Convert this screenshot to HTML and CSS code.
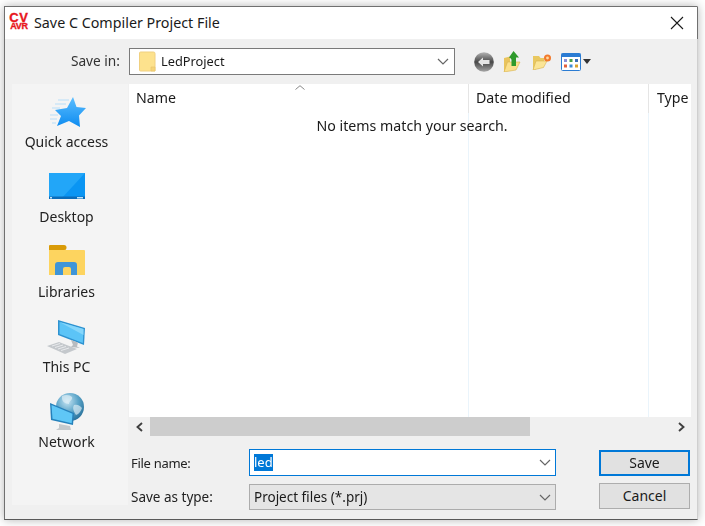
FILE: index.html
```html
<!DOCTYPE html>
<html lang="en">
<head>
<meta charset="utf-8">
<title>Save C Compiler Project File</title>
<link rel="stylesheet" href="styles.css">
</head>
<body>
<div class="window">
  <header class="titlebar">
    <div class="app-logo"><span class="cv">CV</span><span class="avr">AVR</span></div>
    <span class="title">Save C Compiler Project File</span>
    <svg class="close" width="14" height="14" viewBox="0 0 14 14"><path d="M1 1L13 13M13 1L1 13" stroke="#1a1a1a" stroke-width="1.1" fill="none"/></svg>
  </header>
  <div class="toolbar">
    <span class="savein">Save in:</span>
    <div class="combo">
      <svg class="folder-small" width="17" height="21" viewBox="0 0 17 21"><path d="M1.500 1h13a1.500 1.500 0 0 1 1.500 1.500V20H1.500A1 1 0 0 1 .5 19V2A1 1 0 0 1 1.500 1z" fill="#fde28d" stroke="#f0d080"/><path d="M12 20v-4h4v4z" fill="#f6d478" stroke="#e8c468" stroke-width=".6"/></svg>
      <span class="combo-text">LedProject</span>
      <svg class="chev" width="12" height="7" viewBox="0 0 12 7"><path d="M1 1l5 5 5-5" stroke="#666" stroke-width="1.200" fill="none"/></svg>
    </div>
    <div class="tools">
      <svg width="20" height="20" viewBox="0 0 20 20">
        <defs><linearGradient id="gb" x1="0" y1="0" x2="0" y2="1"><stop offset="0" stop-color="#b4b4b4"/><stop offset=".5" stop-color="#474747"/><stop offset="1" stop-color="#a6a6a6"/></linearGradient></defs>
        <circle cx="10" cy="10" r="9.800" fill="url(#gb)"/>
        <path d="M4 10l5-4.500V8h6.500v4H9v2.500z" fill="#e6e6e6"/>
      </svg>
      <svg width="18" height="21" viewBox="0 0 18 21">
        <path d="M1 7l6-1.500V19l-6 2z" fill="#e9c45d"/>
        <path d="M1 21l3.500-10H17l-4 8z" fill="#fbe08c" stroke="#d9b450" stroke-width=".6"/>
        <path d="M10.500 0l5.500 6.500h-3V15H8.500V9C8.500 8 7.500 7 6 6.500z" fill="#2e9a2c"/>
      </svg>
      <svg class="tool-new" width="20" height="16" viewBox="0 0 20 16">
        <path d="M1 2h6l1.500 2H12v9l-11 3z" fill="#e9c860"/>
        <path d="M1 16l3-9h11l-3.500 6.500z" fill="#fbe596" stroke="#d9b450" stroke-width=".6"/>
        <circle cx="15.500" cy="4" r="3.500" fill="#f2792b"/>
        <circle cx="15.500" cy="4" r="1.400" fill="#fdd9a0"/>
      </svg>
      <div class="viewgroup">
        <svg width="20" height="18" viewBox="0 0 20 18">
          <rect x=".5" y=".5" width="19" height="17" rx="1" fill="#fff" stroke="#2b7cd3"/>
          <rect x=".5" y=".5" width="19" height="3.500" fill="#2b7cd3"/>
          <rect x="3" y="6" width="3" height="3" fill="#8d8fd6"/><rect x="8.500" y="6" width="3" height="3" fill="#4aa04a"/><rect x="14" y="6" width="3" height="3" fill="#3c6fb8"/>
          <rect x="3" y="11.500" width="3" height="3" fill="#e2603c"/><rect x="8.500" y="11.500" width="3" height="3" fill="#3d8cd6"/><rect x="14" y="11.500" width="3" height="3" fill="#d9a32e"/>
        </svg>
        <span class="caret"></span>
      </div>
    </div>
  </div>
  <div class="main">
    <nav class="sidebar">
      <div class="place place-star">
        <svg width="37" height="30" viewBox="0 0 37 30">
          <defs><linearGradient id="gs" x1="0" y1="0" x2="0" y2="1"><stop offset="0" stop-color="#5cbeff"/><stop offset="1" stop-color="#0d8bf0"/></linearGradient></defs>
          <path d="M9 3h11M6 7h11M3 11h8M1 18h8M1 22h7M3 26h4" stroke="#a8d8f8" stroke-width="1.200" opacity=".8"/>
          <path d="M24 0l3.500 10 9.500 1-7 7.500L31 30l-11-6-12 5 4-10-6-6 12-2z" fill="url(#gs)"/>
        </svg>
        <span>Quick access</span>
      </div>
      <div class="place place-desk">
        <svg width="36" height="26" viewBox="0 0 36 26">
          <rect width="36" height="26" fill="#0a95f3"/>
          <path d="M0 0h36L12 26H0z" fill="#22a6f8"/>
          <rect y="23.500" width="36" height="2.500" fill="#0a6cba"/>
          <rect x="1" y="24" width="2" height="1.500" fill="#bfe2f7"/>
          <rect x="28" y="24" width="6" height="1.500" fill="#bfe2f7"/>
        </svg>
        <span>Desktop</span>
      </div>
      <div class="place place-lib">
        <svg width="36" height="30" viewBox="0 0 36 30">
          <path d="M0 2h15l2 3h18a1 1 0 0 1 1 1v24H0z" fill="#fdd45f"/>
          <path d="M0 1a1 1 0 0 1 1-1h14a2.500 2.500 0 0 1 0 5H0z" fill="#d99b08"/>
          <path d="M6 30V20a3 3 0 0 1 3-3h16a3 3 0 0 1 3 3v10h-6v-6a2 2 0 0 0-2-2h-4a2 2 0 0 0-2 2v6z" fill="#3f95d8"/>
        </svg>
        <span>Libraries</span>
      </div>
      <div class="place place-pc">
        <svg width="40" height="34" viewBox="0 0 40 34">
          <path d="M12 0l27 8-1 17-26-10z" fill="#2e92d0"/>
          <path d="M13.500 2l24 7-.7 14-23.300-9z" fill="#5cc4f7"/>
          <path d="M13.500 2l24 7v6z" fill="#85d6fb"/>
          <path d="M25 20l7 2.500-1 4 3 1.500-9-1 2-2z" fill="#b8bcc0"/>
          <path d="M1 26l12-4 18 7-12 5z" fill="#c4c8cc"/>
          <path d="M6 26l8-2.500M9 27.500l8-2.500M12 29l8-2.500M15 30.500l8-2.500" stroke="#e8eaec" stroke-width="1"/>
        </svg>
        <span>This PC</span>
      </div>
      <div class="place place-net">
        <svg width="35" height="37" viewBox="0 0 35 37">
          <defs><radialGradient id="gg" cx=".4" cy=".3" r=".8"><stop offset="0" stop-color="#c6e4f2"/><stop offset=".5" stop-color="#5aa4c8"/><stop offset="1" stop-color="#1f6691"/></radialGradient></defs>
          <circle cx="21" cy="14" r="14" fill="url(#gg)"/>
          <path d="M13 3c4-2 8-1 10 1 1 3-3 4-3 7-4 0-8-3-7-8zM25 12c4-1 6 1 8 3-1 3-3 6-6 7-2-3-4-7-2-10z" fill="#e3f1f7" opacity=".65"/>
          <path d="M1 10l24 10-1 12L2 27z" fill="#2581bb"/>
          <path d="M2.500 12l21 8.700-.8 9.500L3.500 25.800z" fill="#5fc7f6"/>
          <path d="M10 31l11 2 1 4H7l3-2z" fill="#c5c9cc"/>
        </svg>
        <span>Network</span>
      </div>
    </nav>
    <div class="content">
      <section class="list">
        <div class="list-head">
          <div class="col col-name">Name<svg class="sort" width="10" height="5" viewBox="0 0 10 5"><path d="M.5 4.500L5 .7l4.500 3.800" stroke="#888" stroke-width="1" fill="none"/></svg></div>
          <div class="col col-date">Date modified</div>
          <div class="col col-type">Type</div>
        </div>
        <div class="list-body">
          <div class="guides"><span class="guide-name"></span><span class="guide-date"></span></div>
          <p class="empty">No items match your search.</p>
        </div>
      </section>
      <div class="hscroll">
        <svg class="arrow" width="9" height="10" viewBox="0 0 9 10"><path d="M7 1L2.500 5 7 9" stroke="#404040" stroke-width="1.900" fill="none"/></svg>
        <div class="track"><div class="thumb"></div></div>
        <svg class="arrow" width="9" height="10" viewBox="0 0 9 10"><path d="M2 1l4.500 4L2 9" stroke="#404040" stroke-width="1.900" fill="none"/></svg>
      </div>
      <div class="form">
        <label class="lbl lbl-name">File name:</label>
        <div class="field field-name">
          <span class="sel">led</span>
          <svg class="chev" width="12" height="7" viewBox="0 0 12 7"><path d="M1 1l5 5 5-5" stroke="#666" stroke-width="1.200" fill="none"/></svg>
        </div>
        <button class="btn btn-save">Save</button>
        <label class="lbl lbl-type">Save as type:</label>
        <div class="field field-type">
          <span>Project files (*.prj)</span>
          <svg class="chev" width="12" height="7" viewBox="0 0 12 7"><path d="M1 1l5 5 5-5" stroke="#666" stroke-width="1.200" fill="none"/></svg>
        </div>
        <button class="btn btn-cancel">Cancel</button>
      </div>
    </div>
  </div>
</div>
</body>
</html>
```

FILE: styles.css
```css
* { box-sizing: border-box; }
html, body { margin: 0; padding: 0; height: 100%; overflow: hidden; background: #fff; }
body {
  width: 705px;
  height: 526px;
  font-family: "Noto Sans", "Open Sans", sans-serif;
  font-size: 14px;
  color: #1a1a1a;
  padding: 6px 7px 6px 4px;
}
.window {
  width: 694px;
  height: 514px;
  background: #f0f0f0;
  border: 1px solid #707070;
  border-right-color: #cfcfcf;
  border-bottom-color: #5a5a5a;
  box-shadow: 0 0 9px rgba(0,0,0,.3);
  display: flex;
  flex-direction: column;
  filter: blur(.42px);
}
.titlebar {
  height: 32px;
  flex: none;
  background: #fff;
  display: flex;
  align-items: center;
  padding: 0 13px 0 4px;
  margin-right: -1px;
  border-right: 1px solid #707070;
}
.app-logo {
  width: 20px;
  display: flex;
  flex-direction: column;
  align-items: center;
  color: #e8161c;
  font-family: "Liberation Sans", sans-serif;
  font-weight: 700;
  line-height: 1;
  margin-bottom: 3px;
  -webkit-text-stroke: .35px #e8161c;
}
.cv { font-size: 13px; height: 9px; line-height: 9px; letter-spacing: .8px; }
.avr { font-size: 9px; height: 8px; line-height: 8px; letter-spacing: -.2px; }
.title { margin-left: 5px; flex: 1; font-size: 14.300px; line-height: 20px; }
.close { flex: none; }
.toolbar {
  height: 45px;
  flex: none;
  display: flex;
  align-items: center;
}
.savein { width: 115px; text-align: right; padding-bottom: 2px; font-size: 13.700px; color: #333; }
.combo {
  margin-left: 9px;
  width: 326px;
  height: 27px;
  background: #fff;
  border: 1px solid #7a7a7a;
  display: flex;
  align-items: center;
  padding: 0 5px 0 9px;
}
.combo-text { margin-left: 5px; flex: 1; font-size: 12.800px; padding-bottom: 2px; }
.folder-small { flex: none; }
.tools {
  margin-left: 19px;
  display: flex;
  align-items: center;
  gap: 9px;
}
.tool-new { margin-left: 2px; }
.viewgroup { display: flex; align-items: center; gap: 2px; }
.caret {
  width: 0; height: 0;
  border-left: 4.500px solid transparent;
  border-right: 4.500px solid transparent;
  border-top: 5px solid #333;
}
.main { flex: 1; display: flex; min-height: 0; }
.sidebar {
  margin-left: 7px;
  width: 116px;
  height: 421px;
  flex: none;
  background: #f4f4f4;
  display: flex;
  flex-direction: column;
  padding-right: 7px;
}
.place {
  height: 75px;
  display: flex;
  flex-direction: column;
  align-items: center;
  justify-content: flex-end;
  padding-bottom: 7px;
  flex: none;
  color: #222;
}
.place span { line-height: 20px; }
.place-star svg { margin: 0 0 5px 1px; }
.place-desk svg { margin: 0 0 8px; }
.place-lib svg { margin: 0 0 7px; }
.place-pc svg { margin: 0 0 3px -1px; }
.place-net svg { margin: 0 0 2px; }
.content { margin-left: 1px; width: 562px; display: flex; flex-direction: column; }
.list { height: 333px; flex: none; background: #fff; display: flex; flex-direction: column; font-size: 14.200px; }
.list-head { height: 29px; flex: none; display: flex; }
.col { height: 29px; padding-top: 4px; line-height: 20px; border-right: 1px solid #e5e5e5; position: relative; }
.col-name { width: 340px; padding-left: 7px; }
.col-date { width: 180px; padding-left: 7px; }
.col-type { flex: 1; padding-left: 8px; border-right: 0; }
.sort { position: absolute; left: 166px; top: 1px; }
.list-body { flex: 1; position: relative; }
.guides { position: absolute; inset: 0; display: flex; pointer-events: none; }
.guides span { border-right: 1px solid #eaf4fb; }
.guide-name { width: 340px; }
.guide-date { width: 180px; }
.empty { position: relative; margin: 3px 0 0; padding-left: 4px; text-align: center; line-height: 20px; }
.hscroll {
  height: 19px;
  flex: none;
  display: flex;
  align-items: center;
  padding: 0 5px 0 6px;
}
.arrow { flex: none; }
.track { flex: 1; height: 19px; margin: 0 14px 0 6px; }
.thumb { width: 380px; height: 19px; background: #cdcdcd; }
.form {
  display: grid;
  grid-template-columns: 120px 307px 91px;
  column-gap: 0;
  grid-template-rows: 27px 27px;
  row-gap: 7px;
  margin-top: 13px;
  justify-content: start;
}
.lbl { padding-left: 2px; align-self: center; color: #222; }
.lbl-name { padding-top: 1px; font-size: 13px; letter-spacing: -.3px; }
.lbl-type { font-size: 13.500px; }
.field {
  display: flex;
  align-items: center;
  justify-content: space-between;
  padding: 0 4px;
  font-size: 13.500px;
}
.field-name { background: #fff; border: 1px solid #0078d7; font-size: 13px; }
.sel { background: #0078d7; color: #fff; line-height: 17px; height: 17px; }
.field-type { background: #e5e5e5; border: 1px solid #acacac; height: 26px; align-self: end; }
.btn {
  font: inherit;
  color: #1a1a1a;
  width: 91px;
  height: 26px;
  margin-left: 43px;
  background: #e1e1e1;
  padding: 0 0 2px;
}
.btn-save { border: 2px solid #0078d7; align-self: end; }
.btn-cancel { border: 1px solid #adadad; align-self: start; }
```
